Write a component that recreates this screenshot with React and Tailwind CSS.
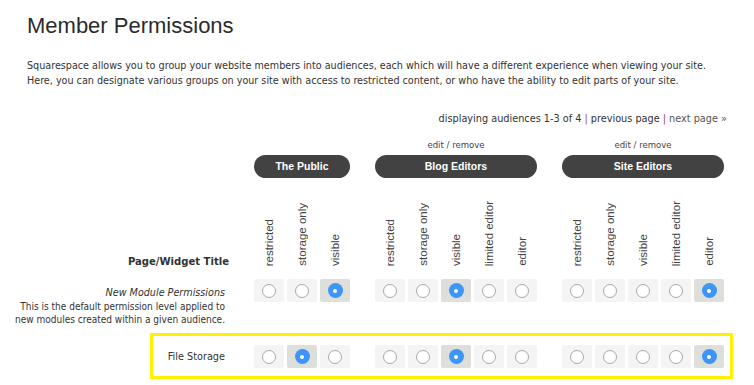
import React from 'react';

const groups = [
  { name: 'The Public', edit: false, cols: ['restricted', 'storage only', 'visible'], def: 2, file: 1 },
  { name: 'Blog Editors', edit: true, cols: ['restricted', 'storage only', 'visible', 'limited editor', 'editor'], def: 2, file: 2 },
  { name: 'Site Editors', edit: true, cols: ['restricted', 'storage only', 'visible', 'limited editor', 'editor'], def: 4, file: 4 },
];

const tahoma = "font-['DejaVu_Sans_Condensed','DejaVu_Sans',sans-serif]";
const helv = "font-['Liberation_Sans',Arial,sans-serif]";

const Radio = ({ on }) => (
  <div className={`w-[30px] h-[23px] rounded-[2px] flex items-center justify-center ${on ? 'bg-[#dcdfda]' : 'bg-[#f4f4f4]'}`}>
    {on ? (
      <div className="w-[15px] h-[15px] rounded-full bg-[#3d95f7] flex items-center justify-center">
        <div className="w-[4px] h-[4px] rounded-full bg-white" />
      </div>
    ) : (
      <div className="w-[14px] h-[14px] rounded-full border border-[#a9a9a9] bg-white" />
    )}
  </div>
);

const RadioRow = ({ field }) => (
  <div className="flex gap-[25px]">
    {groups.map((g) => (
      <div key={g.name} className="flex gap-[3px]">
        {g.cols.map((c, i) => (
          <Radio key={c} on={g[field] === i} />
        ))}
      </div>
    ))}
  </div>
);

export default function App() {
  return (
    <div className="w-[754px] h-[385px] bg-white overflow-hidden text-[#333]">
      {/* Header */}
      <div className="px-[27px] pt-[12px]">
        <h1 className={`${helv} text-[22px] leading-[28px] font-normal text-[#2b2b2b]`}>Member Permissions</h1>
        <p className={`${tahoma} text-[10.7px] leading-[15px] mt-[18px] text-[#333] whitespace-nowrap`}>
          Squarespace allows you to group your website members into audiences, each which will have a different experience when viewing your site.
          <br />
          Here, you can designate various groups on your site with access to restricted content, or who have the ability to edit parts of your site.
        </p>
        <div className={`${tahoma} text-[10.8px] leading-[15px] mt-[23px] text-right`}>
          <span className="text-[#333]">displaying audiences 1-3 of 4 </span>
          <span className="text-[#9c4a4a]">|</span>
          <span className="text-[#333]"> previous page </span>
          <span className="text-[#9c4a4a]">|</span>
          <span className="text-[#555]"> next page »</span>
        </div>
      </div>

      {/* Audience headers */}
      <div className="flex mt-[13px]">
        <div className="w-[254px] shrink-0" />
        <div className="flex gap-[25px]">
          {groups.map((g) => (
            <div key={g.name} className="flex flex-col items-stretch">
              <div className={`${tahoma} h-[12px] text-[9.5px] leading-[12px] text-center text-[#444]`}>
                {g.edit ? 'edit / remove' : ''}
              </div>
              <div className={`${helv} mt-[4px] h-[23px] rounded-full bg-[#424242] text-white text-[10.5px] font-bold flex items-center justify-center`}>
                {g.name}
              </div>
              <div className="flex gap-[3px] h-[89px] items-end pb-[1px]">
                {g.cols.map((c) => (
                  <div key={c} className="w-[30px] flex justify-center">
                    <span className={`${helv} text-[11.5px] leading-[14px] text-[#444] [writing-mode:vertical-rl] rotate-180 whitespace-nowrap`}>
                      {c}
                    </span>
                  </div>
                ))}
              </div>
            </div>
          ))}
        </div>
      </div>

      {/* Page/Widget Title sits on the label baseline */}
      <div className="flex -mt-[12px] h-[14px]">
        <div className={`${tahoma} w-[254px] pr-[25px] text-right text-[11.2px] leading-[14px] font-bold text-[#333]`}>
          Page/Widget Title
        </div>
      </div>

      {/* New module permissions */}
      <div className="flex mt-[10px]">
        <div className="w-[254px] shrink-0 pr-[29px] text-right pt-[6px]">
          <div className={`${tahoma} italic text-[10.7px] leading-[15px] text-[#333]`}>New Module Permissions</div>
          <div className={`${tahoma} text-[10px] leading-[13px] text-[#333]`}>
            This is the default permission level applied to
            <br />
            new modules created within a given audience.
          </div>
        </div>
        <div>
          <RadioRow field="def" />
        </div>
      </div>

      {/* File Storage, highlighted */}
      <div className="ml-[150px] w-[583px] mt-[7px] border-[3px] border-[#fff200] pt-[9px] pb-[8px] flex items-center">
        <div className={`${tahoma} w-[101px] shrink-0 pr-[29px] text-right text-[10.8px] leading-[15px] text-[#333]`}>
          File Storage
        </div>
        <RadioRow field="file" />
      </div>
    </div>
  );
}
